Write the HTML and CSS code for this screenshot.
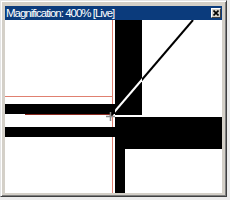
FILE: index.html
```html
<!DOCTYPE html>
<html>
<head>
<meta charset="utf-8">
<link rel="stylesheet" href="styles.css">
</head>
<body>
<div class="window">
  <div class="titlebar">
    <span class="title">Magnification: 400% [Live]</span>
    <span class="close">
      <svg width="6" height="6" viewBox="0 0 6 6"><path d="M0.5 0.5L5.5 5.5M5.5 0.5L0.5 5.5" stroke="#000" stroke-width="1.6"/></svg>
    </span>
  </div>
  <div class="view">
    <svg class="canvas" width="217" height="173" viewBox="0 0 217 173">
      <defs>
        <clipPath id="blk">
          <rect x="110" y="0" width="27" height="95"/>
        </clipPath>
      </defs>
      <line x1="107.5" y1="0" x2="107.5" y2="173" stroke="#e08070" stroke-width="1"/>
      <line x1="0" y1="76.5" x2="107" y2="76.5" stroke="#e08070" stroke-width="1"/>
      <rect x="110" y="0" width="27" height="95" fill="#000"/>
      <rect x="0" y="84" width="110" height="10" fill="#000"/>
      <rect x="0" y="107" width="110" height="10" fill="#000"/>
      <rect x="110" y="97" width="107" height="32" fill="#000"/>
      <rect x="110" y="129" width="10" height="44" fill="#000"/>
      <line x1="20" y1="94.5" x2="107" y2="94.5" stroke="#8a2a20" stroke-width="1"/>
      <line x1="188" y1="0" x2="105" y2="97" stroke="#000" stroke-width="2"/>
      <line x1="188" y1="0" x2="105" y2="97" stroke="#fff" stroke-width="2" clip-path="url(#blk)"/>
      <path d="M105.5 92v9M101 96.5h9" stroke="#8c8c8c" stroke-width="1.5"/>
    </svg>
  </div>
</div>
</body>
</html>
```
FILE: styles.css
```css
html, body {
  margin: 0;
  padding: 0;
}
body {
  width: 230px;
  height: 200px;
  background: #ececec;
  overflow: hidden;
}
.window {
  width: 227px;
  height: 197px;
  box-sizing: border-box;
  border: 1px solid;
  border-color: #e4e4e4 #404040 #404040 #e4e4e4;
  background: #d4d0c8;
  box-shadow: inset 1px 1px #ffffff, inset -1px -1px #808080;
  padding: 5px 4px 3px 4px;
  display: flex;
  flex-direction: column;
}
.titlebar {
  height: 14px;
  background: #0b3b7c;
  display: flex;
  align-items: center;
  justify-content: space-between;
  padding: 0 1px 0 1px;
}
.title {
  color: #ffffff;
  font-family: "Liberation Sans", Arial, sans-serif;
  font-size: 11.5px;
  letter-spacing: -1px;
  line-height: 14px;
  white-space: nowrap;
}
.close {
  width: 10px;
  height: 10px;
  box-sizing: border-box;
  background: #d4d0c8;
  border: 1px solid;
  border-color: #ffffff #404040 #404040 #ffffff;
  display: flex;
  align-items: center;
  justify-content: center;
}
.close svg {
  display: block;
}
.view {
  width: 217px;
  height: 173px;
  background: #ffffff;
}
.canvas {
  display: block;
}
```
